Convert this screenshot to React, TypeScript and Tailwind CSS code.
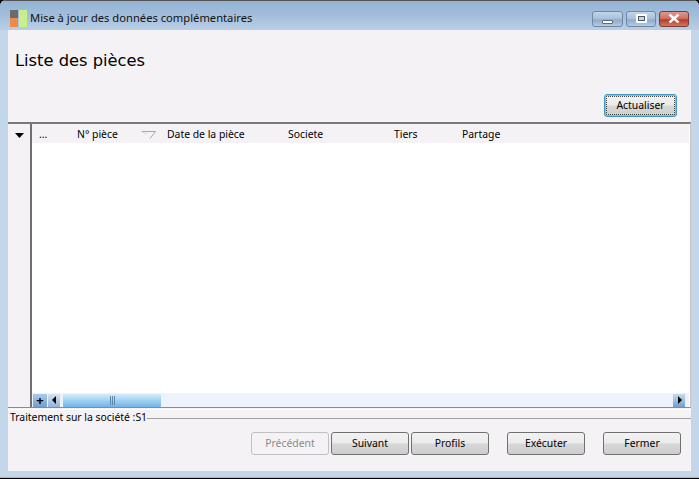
const columns = [
  ["...", "w-[38px]"],
  ["N° pièce", "w-[64px]"],
  ["", "w-[26px]"],
  ["Date de la pièce", "w-[121px]"],
  ["Societe", "w-[106px]"],
  ["Tiers", "w-[68px]"],
  ["Partage", "w-[80px]"],
];

function WinButton({ label, disabled, className = "" }: { label: string; disabled?: boolean; className?: string }) {
  return (
    <button
      className={
        "flex h-[23px] w-[78px] items-center justify-center rounded-[3px] border text-[10.4px] " +
        (disabled
          ? "border-[#c0c0c0] bg-[#f4f2f4] text-[#8a8a8a] "
          : "border-[#707070] bg-[linear-gradient(#f2f2f2_0%,#ebebeb_45%,#d6d6d6_55%,#cfcfcf_100%)] text-black ") +
        className
      }
    >
      {label}
    </button>
  );
}

function Arrow({ dir }: { dir: "left" | "right" }) {
  return (
    <svg width="5" height="8" viewBox="0 0 5 8">
      <path d={dir === "left" ? "M4 0v8L0 4z" : "M1 0v8l4-4z"} fill="#000" />
    </svg>
  );
}

export default function App() {
  return (
    <div className="h-[479px] w-[699px] bg-black">
      <div className="flex h-[479px] w-[699px] flex-col overflow-hidden rounded-t-[6px] border-b border-black bg-[#c3d6ea] font-['Noto_Sans',sans-serif] text-[10.4px] text-black">
        {/* title bar */}
        <div className="flex h-[30px] shrink-0 items-center border-t border-[#555] bg-[linear-gradient(#94b3d4_0%,#a3bedc_50%,#b9cfe6_100%)] pl-[10px] pr-[10px] pt-[6px]">
          <svg width="17" height="17" viewBox="0 0 17 17" className="shrink-0">
            <rect x="0" y="0" width="8" height="8" fill="#6b6b6b" />
            <rect x="0" y="8" width="8" height="9" fill="#f08a4b" />
            <rect x="9" y="0" width="8" height="17" fill="#c8f08a" />
          </svg>
          <span className="ml-[3px] whitespace-nowrap text-[11.2px] text-[#111]">
            Mise à jour des données complémentaires
          </span>
          <div className="ml-auto flex gap-[3px]">
            <div className="flex h-[16px] w-[31px] items-end justify-center rounded-[3px] border border-[#6f88a4] bg-[linear-gradient(#c3d5e8_0%,#a8c0da_50%,#8faac8_55%,#b4cbe2_100%)] pb-[2px]">
              <div className="h-[4px] w-[11px] rounded-[1px] border border-[#5a6a7c] bg-white" />
            </div>
            <div className="flex h-[16px] w-[30px] items-center justify-center rounded-[3px] border border-[#6f88a4] bg-[linear-gradient(#c3d5e8_0%,#a8c0da_50%,#8faac8_55%,#b4cbe2_100%)]">
              <div className="flex h-[9px] w-[11px] items-center justify-center rounded-[1px] bg-white">
                <div className="h-[5px] w-[7px] border border-[#4a5a6c] bg-[#c3d5e8]" />
              </div>
            </div>
            <div className="flex h-[16px] w-[30px] items-center justify-center rounded-[3px] border border-[#7d3a33] bg-[linear-gradient(#dd9a90_0%,#cf6a5c_50%,#b8392b_55%,#cf7a62_100%)]">
              <svg width="12" height="9" viewBox="0 0 12 9">
                <path d="M1.500 .5L10.500 8.500M10.500 .5L1.500 8.500" stroke="#fff" strokeWidth="2.400" fill="none" />
              </svg>
            </div>
          </div>
        </div>

        {/* client area */}
        <div className="mx-[8px] flex min-h-0 flex-1 flex-col bg-[#f5f2f6]">
          <h1 className="mt-[21px] pl-[7px] font-['DejaVu_Sans',sans-serif] text-[16.3px] leading-[20px]">Liste des pièces</h1>

          <div className="mt-[23px] flex justify-end pr-[14px]">
            <button className="flex h-[23px] w-[73px] items-center justify-center rounded-[3px] border border-[#3f9cc0] bg-[linear-gradient(#f2f2f2_0%,#ebebeb_45%,#d6d6d6_55%,#cfcfcf_100%)] text-[10.4px] shadow-[inset_0_0_0_1px_#7fc4dc] outline-1 -outline-offset-3 outline-dotted outline-[#444]">
              Actualiser
            </button>
          </div>

          {/* grid */}
          <div className="mt-[5px] flex h-[286px] shrink-0 flex-col border-t-2 border-r border-b border-t-[#7a7a7a] border-r-[#c4c4c4] border-b-[#8a8a8a] bg-white pr-[1px]">
            <div className="flex min-h-0 flex-1">
              <div className="flex w-[24px] shrink-0 justify-center border-r-2 border-[#707070] bg-[#f5f2f6] pt-[9px]">
                <svg width="9" height="5" viewBox="0 0 9 5">
                  <path d="M0 0h9L4.500 5z" fill="#000" />
                </svg>
              </div>
              <div className="flex min-w-0 flex-1 flex-col">
                <div className="flex h-[19px] shrink-0 items-center bg-[#f5f2f6] pl-[7px] pt-[2px]">
                  {columns.map(([label, width], i) => (
                    <div key={i} className={width + " shrink-0 whitespace-nowrap"}>
                      {i === 2 ? (
                        <svg width="15" height="8" viewBox="0 0 15 8">
                          <path d="M0 .5h14.500M14.500 .5L9 7.500" stroke="#a8a8a8" fill="none" />
                          <path d="M0 .5L6 3" stroke="#d8d8d8" fill="none" />
                        </svg>
                      ) : (
                        label
                      )}
                    </div>
                  ))}
                </div>
                <div className="flex-1 bg-white" />
                <div className="flex h-[14px] shrink-0 items-center bg-[#edf2fb]">
                  <div className="ml-[1px] flex h-[13px] w-[14px] items-center justify-center bg-[linear-gradient(#a9cbe9,#6f9fd0)] text-[13px] font-bold leading-none">+</div>
                  <div className="ml-[1px] flex h-[13px] w-[12px] items-center justify-center bg-[linear-gradient(#d5e4f3,#8fb4da)]">
                    <Arrow dir="left" />
                  </div>
                  <div className="ml-[3px] flex h-[13px] w-[98px] items-center justify-center gap-[1px] rounded-[1px] bg-[linear-gradient(#d3ecfa,#6fb4e6)]">
                    <span className="h-[9px] w-[1px] bg-[#5d86a8]" />
                    <span className="h-[9px] w-[1px] bg-[#5d86a8]" />
                    <span className="h-[9px] w-[1px] bg-[#5d86a8]" />
                  </div>
                  <div className="ml-auto mr-[4px] flex h-[13px] w-[12px] items-center justify-center bg-[linear-gradient(#c5dcf0,#6f9fd0)]">
                    <Arrow dir="right" />
                  </div>
                </div>
              </div>
            </div>
          </div>

          {/* pale line under the grid */}
          <div className="mt-[1px] h-[1px] shrink-0 bg-white" />

          {/* fieldset label and line */}
          <div className="mt-[1px] flex h-[14px] shrink-0 items-center pl-[2px]">
            <span className="whitespace-nowrap">Traitement sur la société :S1</span>
            <div className="h-[1px] flex-1 bg-[#a0a0a0]" />
          </div>

          <div className="mt-[7px] flex pl-[243px]">
            <WinButton label="Précédent" disabled />
            <WinButton label="Suivant" className="ml-[2px]" />
            <WinButton label="Profils" className="ml-[2px]" />
            <WinButton label="Exécuter" className="ml-[18px]" />
            <WinButton label="Fermer" className="ml-[18px]" />
          </div>
        </div>

        {/* bottom frame */}
        <div className="h-[7px] shrink-0 border-b border-[#6fd0e8] bg-[#c3d6ea]" />
      </div>
    </div>
  );
}
